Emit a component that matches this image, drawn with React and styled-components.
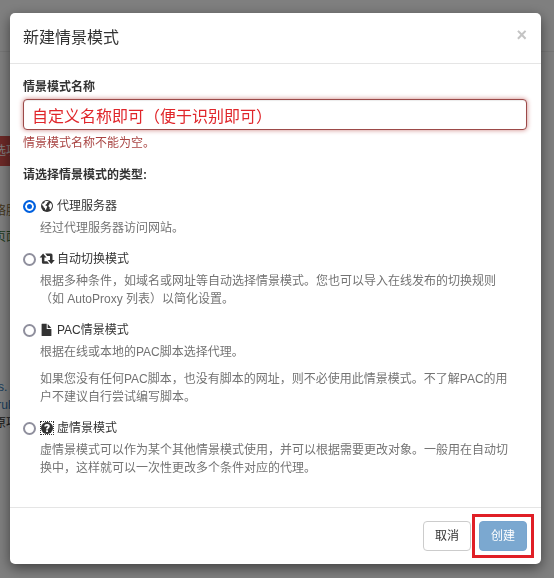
import { useState } from "react";
import styled, { createGlobalStyle } from "styled-components";

const GlobalStyle = createGlobalStyle`
  *, *::before, *::after {
    box-sizing: border-box;
  }
  body {
    margin: 0;
    background: #fff;
    color: #333;
    font-family: "Liberation Sans", "Noto Sans CJK SC", sans-serif;
    font-size: 12px;
    line-height: 18px;
  }
  p {
    margin: 0;
  }
`;

const Page = styled.div`
  min-height: 100vh;
  padding-top: 51px;
  overflow: hidden;
  white-space: nowrap;
`;

const PageBody = styled.div`
  border-top: 1px solid #eee;
  padding-top: 84px;
`;

const DangerBar = styled.div`
  width: 120px;
  padding: 6px 0;
  text-indent: -6px;
  background: #d9534f;
  color: #fff;
`;

const PageText = styled.p`
  margin-top: ${({ $gap }) => $gap || 0}px;
  text-indent: -6px;
  color: ${({ $color }) => $color || "inherit"};
`;

const Backdrop = styled.div`
  position: fixed;
  inset: 0;
  padding: 13px 13px 13px 10px;
  background: rgba(0, 0, 0, 0.5);
  overflow: auto;
`;

const Dialog = styled.form`
  max-width: 600px;
  margin: 0 auto;
  background: #fff;
  border-radius: 5px;
  box-shadow: 0 4px 13px rgba(0, 0, 0, 0.5);
`;

const Header = styled.header`
  display: flex;
  justify-content: space-between;
  align-items: flex-start;
  padding: 13px 14px 13px 13px;
  border-bottom: 1px solid #e5e5e5;
`;

const Title = styled.h4`
  margin: 0;
  font-size: 16px;
  font-weight: 400;
  line-height: 24px;
`;

const CloseBtn = styled.button`
  padding: 0;
  border: 0;
  background: none;
  color: #c4c4c4;
  font: bold 18px/18px "Liberation Sans", sans-serif;
  cursor: pointer;
`;

const Body = styled.div`
  padding: 14px 14px 30px 13px;
`;

const FieldLabel = styled.label`
  display: block;
  margin-bottom: 3px;
  font-weight: 700;
`;

const NameInput = styled.input`
  display: block;
  width: 100%;
  height: 31px;
  padding: 0 8px;
  border: 1px solid #9c4a49;
  border-radius: 4px;
  outline: none;
  box-shadow: inset 0 1px 1px rgba(0, 0, 0, 0.08), 0 0 5px #ce8483;
  background: #fff;
  color: #e0262b;
  font-family: inherit;
  font-size: 16px;
`;

const ErrorText = styled.p`
  margin-top: 4px;
  color: #a94442;
`;

const TypeGroup = styled.fieldset`
  margin: 14px 0 0;
  padding: 0;
  border: 0;
`;

const Legend = styled.legend`
  padding: 0;
  font-weight: 700;
`;

const TypeItem = styled.div`
  margin-top: 13px;
`;

const TypeLabel = styled.label`
  display: flex;
  align-items: center;
  cursor: pointer;
`;

const Radio = styled.input`
  appearance: none;
  flex: none;
  width: 13px;
  height: 13px;
  margin: 0 4px 0 0;
  border: 2px solid #8f8f9d;
  border-radius: 50%;
  background: #fff;

  &:checked {
    border-color: #0060df;
    background: #0060df;
    box-shadow: inset 0 0 0 2px #fff;
  }
`;

const Icon = styled.svg`
  flex: none;
  width: 14px;
  height: 14px;
  margin-right: 3px;
  fill: #333;
  overflow: visible;
  outline: ${({ $dotted }) => ($dotted ? "1px dotted #333" : "none")};
  outline-offset: -1px;
`;

const Description = styled.div`
  display: grid;
  gap: 9px;
  margin-top: 4px;
  padding: 0 11px 0 17px;
  color: #737373;
`;

const Footer = styled.footer`
  display: flex;
  justify-content: flex-end;
  align-items: center;
  gap: 8px;
  padding: 13px 14px 13px 13px;
  border-top: 1px solid #e5e5e5;
`;

const Button = styled.button`
  height: 30px;
  padding: 0 11px;
  border: 1px solid ${({ $primary }) => ($primary ? "#77a5cf" : "#ccc")};
  border-radius: 4px;
  background: ${({ $primary }) => ($primary ? "#7ba8d0" : "#fff")};
  color: ${({ $primary }) => ($primary ? "#fff" : "#333")};
  font: inherit;
  cursor: pointer;
`;

const Highlight = styled.span`
  display: flex;
  margin: -7px;
  padding: 4px;
  border: 3px solid #e01f26;
`;

const GlobeIcon = () => (
  <Icon viewBox="0 0 14 14" aria-hidden="true">
    <circle cx="7" cy="7" r="6" />
    <path
      fill="#fff"
      d="M7.3 1.9 8.6 2.3 8.2 3.3 6.9 3.8 7 4.8 5.9 5.4 5.2 6.4 6.5 6.7 7.3 7.8 6.6 9 6.1 10.4 5.3 10.9 4.9 9.2 3.6 8.2 3.3 6.9 2 5.9 2.5 4.4 3.7 4.6 4.6 3.6 4.5 2.7 5.7 2zM9.8 4.1 11.1 4.3 12 6 11.9 8 11 9.9 10 10.7 9.5 9.6 9.8 8.4 8.7 7.6 8.5 6.3 9.4 5.6z"
    />
  </Icon>
);

const RetweetIcon = () => (
  <Icon viewBox="0 0 14 14" aria-hidden="true">
    <path d="M3.1 1.6 6.5 5.6H4.4V9.3H7.2L9.2 11.8H3.4Q1.9 11.8 1.9 10.3V5.6H-.4z" />
    <path d="M5.2 1.6H11Q12.5 1.6 12.5 3.1V7.9H14.8L11.3 12 7.8 7.9H10V4.1H7.2z" />
  </Icon>
);

const FileIcon = () => (
  <Icon viewBox="0 0 14 14" aria-hidden="true">
    <path d="M2 .8H6.7V6H11.4V12.4Q11.4 13 10.8 13H2.2Q1.6 13 1.6 12.4V1.3Q1.6 .8 2 .8zM7.7 1 11.3 5H7.7z" />
  </Icon>
);

const QuestionIcon = () => (
  <Icon viewBox="0 0 14 14" aria-hidden="true" $dotted>
    <circle cx="7" cy="7" r="6" />
    <path
      fill="#fff"
      d="M4.3 5.4C4.4 3.8 5.5 3 7.1 3s2.7.9 2.7 2.3c0 1.9-1.8 1.9-1.8 3.1H6.1c0-1.9 1.6-2 1.6-3 0-.5-.3-.7-.7-.7-.5 0-.8.3-.8.9zM6.1 9.2H8V11H6.1z"
    />
  </Icon>
);

const TYPES = [
  {
    id: "proxy",
    name: "代理服务器",
    icon: GlobeIcon,
    text: ["经过代理服务器访问网站。"],
  },
  {
    id: "switch",
    name: "自动切换模式",
    icon: RetweetIcon,
    text: [
      "根据多种条件，如域名或网址等自动选择情景模式。您也可以导入在线发布的切换规则（如 AutoProxy 列表）以简化设置。",
    ],
  },
  {
    id: "pac",
    name: "PAC情景模式",
    icon: FileIcon,
    text: [
      "根据在线或本地的PAC脚本选择代理。",
      "如果您没有任何PAC脚本，也没有脚本的网址，则不必使用此情景模式。不了解PAC的用户不建议自行尝试编写脚本。",
    ],
  },
  {
    id: "virtual",
    name: "虚情景模式",
    icon: QuestionIcon,
    text: [
      "虚情景模式可以作为某个其他情景模式使用，并可以根据需要更改对象。一般用在自动切换中，这样就可以一次性更改多个条件对应的代理。",
    ],
  },
];

const App = () => {
  const [name, setName] = useState("自定义名称即可（便于识别即可）");
  const [type, setType] = useState("proxy");

  return (
    <>
      <GlobalStyle />
      <Page aria-hidden="true">
        <PageBody>
          <DangerBar>选项</DangerBar>
          <PageText $gap={36} $color="#8a6d3b">络服</PageText>
          <PageText $gap={8} $color="#3c763d">页面</PageText>
          <PageText $gap={132} $color="#337ab7">rs.</PageText>
          <PageText $color="#337ab7">/rul</PageText>
          <PageText>原项</PageText>
        </PageBody>
      </Page>
      <Backdrop>
        <Dialog
          role="dialog"
          aria-labelledby="dialog-title"
          onSubmit={(e) => e.preventDefault()}
        >
          <Header>
            <Title id="dialog-title">新建情景模式</Title>
            <CloseBtn type="button" aria-label="关闭">×</CloseBtn>
          </Header>
          <Body>
            <FieldLabel htmlFor="profile-name">情景模式名称</FieldLabel>
            <NameInput
              id="profile-name"
              type="text"
              value={name}
              aria-describedby="profile-name-error"
              onChange={(e) => setName(e.target.value)}
            />
            <ErrorText id="profile-name-error">情景模式名称不能为空。</ErrorText>
            <TypeGroup>
              <Legend>请选择情景模式的类型:</Legend>
              {TYPES.map(({ id, name: label, icon: TypeIcon, text }) => (
                <TypeItem key={id}>
                  <TypeLabel htmlFor={`type-${id}`}>
                    <Radio
                      id={`type-${id}`}
                      type="radio"
                      name="profile-type"
                      value={id}
                      checked={type === id}
                      onChange={() => setType(id)}
                    />
                    <TypeIcon />
                    {label}
                  </TypeLabel>
                  <Description>
                    {text.map((line) => (
                      <p key={line}>{line}</p>
                    ))}
                  </Description>
                </TypeItem>
              ))}
            </TypeGroup>
          </Body>
          <Footer>
            <Button type="button">取消</Button>
            <Highlight>
              <Button type="submit" $primary>创建</Button>
            </Highlight>
          </Footer>
        </Dialog>
      </Backdrop>
    </>
  );
};

export default App;
